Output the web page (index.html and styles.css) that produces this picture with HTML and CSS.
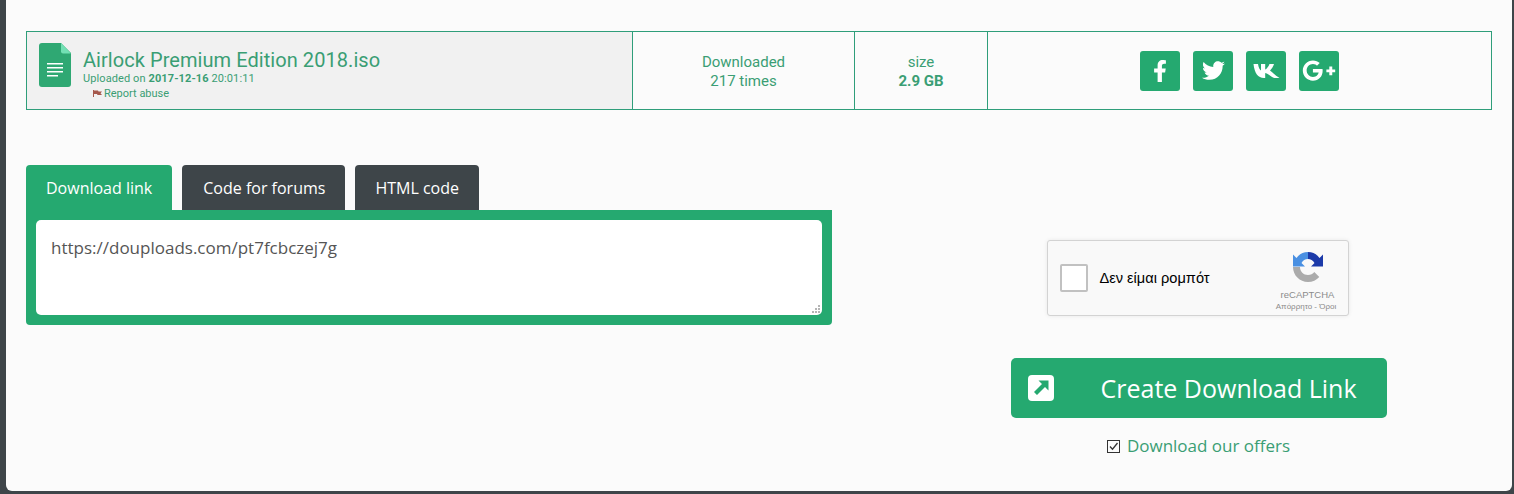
FILE: index.html
```html
<!DOCTYPE html>
<html>
<head>
    <title>Airlock Premium Edition 2018.iso</title>
    <link rel="stylesheet" href="styles.css">
</head>
<body>
    <div class="panel">
        <div class="file-info">
            <div class="cell file-cell">
                <svg class="doc-icon" viewBox="0 0 32 44">
                    <path fill="#2fa873" d="M3 0H22L32 10V41a3 3 0 0 1-3 3H3a3 3 0 0 1-3-3V3a3 3 0 0 1 3-3Z"/>
                    <path fill="#72e0b4" d="M22 0L32 10.5H24a2 2 0 0 1-2-2Z"/>
                    <path fill="#fff" d="M8 20H24V21.6H8ZM8 24H24V25.6H8ZM8 28H24V29.6H8ZM8 32H19V33.6H8Z"/>
                </svg>
                <div class="file-text">
                    <div class="file-name">Airlock Premium Edition 2018.iso</div>
                    <div class="file-date">Uploaded on <b>2017-12-16</b> 20:01:11</div>
                    <div class="file-report">
                        <svg class="flag" viewBox="0 0 9 7"><path fill="#a5584c" d="M0 0H1V7H0ZM1 .5H5L5.5 1.5H9L7.5 3.2 9 5H4.500L4 4H1Z"/></svg>
                        Report abuse
                    </div>
                </div>
            </div>
            <div class="cell stat-cell downloads-cell"><div>Downloaded<br>217 times</div></div>
            <div class="cell stat-cell size-cell"><div>size<br><b>2.9 GB</b></div></div>
            <div class="cell share-cell">
                <a class="share-btn">
                    <svg class="ico-fb" viewBox="0 0 320 512"><path fill="#fff" d="M279.14 288l14.22-92.66h-88.91v-60.13c0-25.35 12.42-50.06 52.24-50.06h40.42V6.26S260.43 0 225.36 0c-73.22 0-121.08 44.38-121.08 124.72v70.62H22.89V288h81.39v224h100.17V288z"/></svg>
                </a>
                <a class="share-btn">
                    <svg class="ico-tw" viewBox="0 0 512 512"><path fill="#fff" d="M459.37 151.716c.325 4.548.325 9.097.325 13.645 0 138.72-105.583 298.558-298.558 298.558-59.452 0-114.68-17.219-161.137-47.106 8.447.974 16.568 1.299 25.34 1.299 49.055 0 94.213-16.568 130.274-44.832-46.132-.975-84.792-31.188-98.112-72.772 6.498.974 12.995 1.624 19.818 1.624 9.421 0 18.843-1.3 27.614-3.573-48.081-9.747-84.143-51.98-84.143-102.985v-1.299c13.969 7.797 30.214 12.67 47.431 13.319-28.264-18.843-46.781-51.005-46.781-87.391 0-19.492 5.197-37.36 14.294-52.954 51.655 63.675 129.3 105.258 216.365 109.807-1.624-7.797-2.599-15.918-2.599-24.04 0-57.828 46.782-104.934 104.934-104.934 30.213 0 57.502 12.67 76.67 33.137 23.715-4.548 46.456-13.645 66.599-25.34-7.798 24.366-24.366 44.833-46.132 57.827 21.117-2.273 41.584-8.122 60.426-16.243-14.292 20.791-32.161 39.308-52.628 54.253z"/></svg>
                </a>
                <a class="share-btn">
                    <svg class="ico-vk" viewBox="0 0 27 16"><path fill="#fff" d="M.5 1H5C5.500 4.500 7 7 8 7.500V1H12.200V6.500C13.500 6.300 15.500 3.500 16.500 1H21C20.500 3.200 18.300 6.300 17 7.600 18.800 8.800 21.500 12 26.500 15H21.500C19.500 15 15 10.500 12.200 10V15H11C5 15 1.500 10 .5 1Z"/></svg>
                </a>
                <a class="share-btn">
                    <svg class="ico-gp" viewBox="0 0 640 512"><path fill="#fff" d="M386.061 228.496c1.834 9.692 3.143 19.384 3.143 31.956C389.204 370.205 315.599 448 204.8 448c-106.084 0-192-85.915-192-192s85.916-192 192-192c51.864 0 95.083 18.859 128.611 50.292l-52.126 50.03c-14.145-13.621-39.028-29.599-76.485-29.599-65.484 0-118.92 54.221-118.92 121.277 0 67.056 53.436 121.277 118.92 121.277 75.961 0 104.513-54.745 108.965-82.773H204.8v-66.009h181.261zm185.406 6.437V179.2h-56.001v55.733h-55.733v56.001h55.733v55.733h56.001v-55.733H627.2v-56.001h-55.733z"/></svg>
                </a>
            </div>
        </div>

        <div class="main-row">
            <div class="link-col">
                <div class="tabs">
                    <div class="tab active">Download link</div>
                    <div class="tab tab-forums">Code for forums</div>
                    <div class="tab">HTML code</div>
                </div>
                <div class="link-box">
                    <textarea class="link-text" spellcheck="false">https://douploads.com/pt7fcbczej7g</textarea>
                    <svg class="grip" viewBox="0 0 9 9">
                        <path fill="#b5b5b5" d="M6 0H8V2H6ZM3 3H5V5H3ZM6 3H8V5H6ZM0 6H2V8H0ZM3 6H5V8H3ZM6 6H8V8H6Z"/>
                    </svg>
                </div>
            </div>

            <div class="action-col">
                <div class="captcha">
                    <div class="captcha-check"></div>
                    <div class="captcha-label">Δεν είμαι ρομπότ</div>
                    <div class="captcha-brand">
                        <svg class="captcha-logo" viewBox="0 0 32 32">
                            <path fill="#4a90e2" d="M16 1C11 1 7 3.500 4.500 7L1 3.500V15.500H13L9.500 12C11 9.500 13 8 16 8Z"/>
                            <path fill="#1c3aa9" d="M16 1C21 1 25 3.500 27.500 7L31 3.500V15.500H19L22.500 12C21 9.500 18.500 8 16 8Z"/>
                            <path fill="#ababab" d="M1 16H8C8 20.500 11.500 24 16 24 18.500 24 21 22.800 22.300 21L27.300 26C24.500 29 20.500 31 16 31 7.700 31 1 24.300 1 16Z"/>
                        </svg>
                        <div class="captcha-name">reCAPTCHA</div>
                        <div class="captcha-terms">Απόρρητο - Όροι</div>
                    </div>
                </div>
                <a class="create-btn">
                    <svg class="create-icon" viewBox="0 0 26 26">
                        <rect width="26" height="26" rx="4" fill="#fff"/>
                        <path fill="#25a970" d="M10.500 5.500H20.500V15.500L17 12 9 20 6 17 14 9Z"/>
                    </svg>
                    <span>Create Download Link</span>
                </a>
                <div class="offers">
                    <svg class="offers-box" viewBox="0 0 13 13">
                        <rect x=".5" y=".5" width="12" height="12" fill="none" stroke="#333"/>
                        <path fill="none" stroke="#333" stroke-width="1.300" d="M3 6.500L5.500 9.200 10.500 3"/>
                    </svg>
                    <span>Download our offers</span>
                </div>
            </div>
        </div>
    </div>
</body>
</html>
```

FILE: styles.css
```css
html, body {
    margin: 0;
    padding: 0;
    height: 100%;
}
body {
    background-color: #3e4549;
    font-family: "Open Sans", sans-serif;
    overflow: hidden;
}
.panel {
    box-sizing: border-box;
    width: 1506px;
    height: 491px;
    margin-left: 6px;
    padding: 31px 20px 0;
    background-color: #fbfbfb;
    border-radius: 0 0 6px 6px;
}
.file-info {
    display: flex;
    height: 79px;
    box-sizing: border-box;
    border: 1px solid #2f9e7a;
    color: #3a9e74;
    font-family: Roboto, sans-serif;
}
.cell {
    box-sizing: border-box;
    border-right: 1px solid #2f9e7a;
}
.file-cell {
    display: flex;
    width: 606px;
    padding: 11px 12px 0;
    background-color: #f1f1f1;
}
.doc-icon {
    width: 32px;
    height: 44px;
    flex: none;
}
.file-text {
    margin-left: 12px;
}
.file-name {
    margin-top: 5px;
    font-size: 20px;
    letter-spacing: 0.06px;
    line-height: 24px;
}
.file-date {
    font-size: 11px;
    letter-spacing: 0.1px;
    line-height: 13px;
}
.file-report {
    display: flex;
    align-items: center;
    margin-left: 10px;
    margin-top: 2px;
    font-size: 11px;
    line-height: 13px;
}
.flag {
    width: 9px;
    height: 7px;
    margin-right: 2px;
}
.stat-cell {
    display: flex;
    align-items: center;
    justify-content: center;
    padding-top: 2px;
    text-align: center;
    font-size: 15px;
    line-height: 19px;
}
.downloads-cell {
    width: 222px;
}
.size-cell {
    width: 133px;
}
.share-cell {
    display: flex;
    flex: 1;
    align-items: center;
    gap: 13px;
    padding-left: 152px;
    border-right: none;
}
.share-btn {
    display: flex;
    align-items: center;
    justify-content: center;
    width: 40px;
    height: 40px;
    background-color: #25a970;
    border-radius: 3px;
}
.ico-fb {
    width: 14px;
    height: 22px;
}
.ico-tw {
    width: 23px;
    height: 23px;
}
.ico-vk {
    width: 27px;
    height: 16px;
}
.ico-gp {
    width: 34px;
    height: 27px;
}
.main-row {
    display: flex;
    margin-top: 55px;
}
.link-col {
    width: 806px;
}
.tabs {
    display: flex;
    gap: 10px;
}
.tab {
    height: 45px;
    padding: 0 20px;
    background-color: #3e4549;
    border-radius: 4px 4px 0 0;
    color: #fff;
    font-size: 16px;
    line-height: 46px;
}
.tab.active {
    background-color: #25a970;
}
.tab-forums {
    padding-left: 21px;
}
.link-box {
    position: relative;
    box-sizing: border-box;
    height: 115px;
    padding: 10px;
    background-color: #25a970;
    border-radius: 0 0 4px 4px;
}
.link-text {
    display: block;
    box-sizing: border-box;
    width: 100%;
    height: 95px;
    padding: 14px 15px;
    border: none;
    outline: none;
    resize: none;
    border-radius: 5px;
    background-color: #fff;
    color: #555;
    font-family: "Open Sans", sans-serif;
    font-size: 17px;
    line-height: 28px;
}
.grip {
    position: absolute;
    right: 11px;
    bottom: 11px;
    width: 9px;
    height: 9px;
}
.action-col {
    display: flex;
    flex-direction: column;
    align-items: center;
    width: 587px;
    margin-left: 73px;
    padding-top: 75px;
}
.captcha {
    display: flex;
    align-items: center;
    box-sizing: border-box;
    width: 302px;
    height: 76px;
    margin-right: 2px;
    background-color: #f9f9f9;
    border: 1px solid #d3d3d3;
    border-radius: 3px;
    box-shadow: 0 0 4px rgba(0,0,0,0.08);
}
.captcha-check {
    box-sizing: border-box;
    width: 28px;
    height: 28px;
    margin-left: 12px;
    background-color: #fff;
    border: 2px solid #c1c1c1;
    border-radius: 2px;
}
.captcha-label {
    flex: 1;
    margin-left: 12px;
    color: #000;
    font-family: "Liberation Sans", sans-serif;
    font-size: 14.6px;
}
.captcha-brand {
    display: flex;
    flex-direction: column;
    align-items: center;
    width: 74px;
    margin-top: 7px;
    margin-right: 3px;
    color: #8b8b8b;
    font-family: "Liberation Sans", sans-serif;
}
.captcha-logo {
    width: 32px;
    height: 32px;
}
.captcha-name {
    margin-top: 6px;
    font-size: 9.5px;
    line-height: 12px;
}
.captcha-terms {
    margin-top: 1px;
    margin-right: 3px;
    font-size: 8px;
    line-height: 10px;
    white-space: nowrap;
}
.create-btn {
    display: flex;
    align-items: center;
    box-sizing: border-box;
    width: 376px;
    height: 60px;
    margin-top: 42px;
    padding-left: 17px;
    background-color: #25a970;
    border-radius: 5px;
    color: #fff;
    font-size: 25px;
}
.create-icon {
    width: 26px;
    height: 26px;
    margin-right: 47px;
}
.offers {
    display: flex;
    align-items: center;
    margin-top: 16px;
    color: #3a9e74;
    font-size: 17px;
    line-height: 24px;
}
.offers-box {
    width: 13px;
    height: 13px;
    margin-right: 7px;
}
```
